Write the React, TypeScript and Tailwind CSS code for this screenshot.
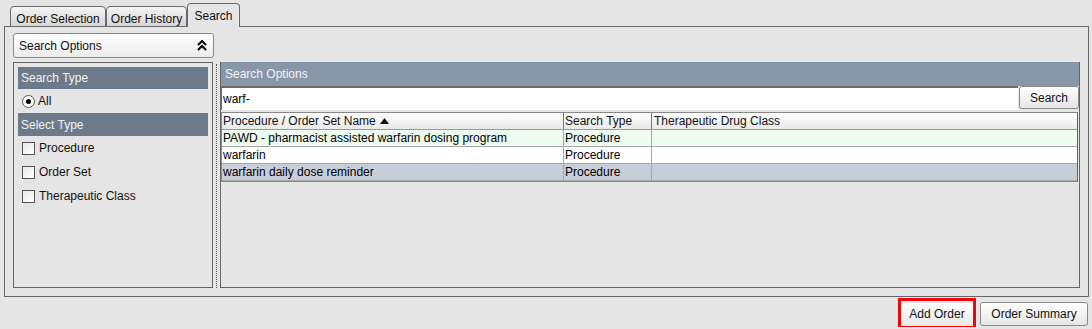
import { useState } from 'react'

const font = { fontFamily: '"Liberation Sans", Arial, sans-serif' }

function Tab({ label, active, width }: { label: string; active?: boolean; width: string }) {
  return (
    <div
      className={`${width} flex items-start justify-center rounded-t-[4px] border border-[#6a6a6a] text-[12px] text-[#111] ${
        active
          ? 'relative z-10 h-[24px] border-b-0 bg-[#e5e5e5] pt-[3px]'
          : 'h-[21px] bg-gradient-to-b from-[#f4f4f4] to-[#d6d6d6] pt-[3px]'
      }`}
    >
      {label}
    </div>
  )
}

function Checkbox({ label }: { label: string }) {
  return (
    <div className="flex h-[24px] items-center pl-[4px] text-[12px] text-[#111]">
      <span className="h-[13px] w-[13px] border border-[#555] bg-gradient-to-br from-[#e8e8e8] to-white" />
      <span className="ml-[4px]">{label}</span>
    </div>
  )
}

const rows = [
  { name: 'PAWD - pharmacist assisted warfarin dosing program', type: 'Procedure', bg: 'bg-[#edfbf0]' },
  { name: 'warfarin', type: 'Procedure', bg: 'bg-white' },
  { name: 'warfarin daily dose reminder', type: 'Procedure', bg: 'bg-[#c8ced9]' },
]

export default function App() {
  const [query, setQuery] = useState('warf-')

  return (
    <div className="h-[329px] w-[1092px] overflow-hidden bg-[#e5e5e5]" style={font}>
      <div className="flex h-[27px] items-end pl-[10px]">
        <Tab label="Order Selection" width="w-[96px]" />
        <Tab label="Order History" width="w-[81px]" />
        <Tab label="Search" width="w-[53px]" active />
      </div>

      <div className="-mt-px ml-[4px] h-[271px] w-[1085px] border border-[#666] pl-[8px] pt-[6px]">
        <div className="flex h-[25px] w-[201px] items-center justify-between rounded-[3px] border border-[#8a8a8a] bg-gradient-to-b from-white to-[#ececec] pl-[5px] pr-[6px] text-[12px] text-[#111]">
          <span>Search Options</span>
          <svg width="10" height="11" viewBox="0 0 10 11">
            <path d="M1 5 L5 1 L9 5 M1 10 L5 6 L9 10" stroke="#000" strokeWidth="2" fill="none" />
          </svg>
        </div>

        <div className="mt-[4px] flex h-[226px]">
          <div className="w-[200px] border border-[#666] px-[4px] pt-[4px]">
            <div className="flex h-[22px] items-center bg-[#6c7a89] pl-[3px] text-[12px] text-[#f2f2f2]">Search Type</div>
            <div className="flex h-[24px] items-center pl-[4px] text-[12px] text-[#111]">
              <span className="flex h-[13px] w-[13px] items-center justify-center rounded-full border border-[#555] bg-white">
                <span className="h-[5px] w-[5px] rounded-full bg-black" />
              </span>
              <span className="ml-[3px]">All</span>
            </div>
            <div className="flex h-[23px] items-center bg-[#6c7a89] pl-[3px] text-[12px] text-[#f2f2f2]">Select Type</div>
            <Checkbox label="Procedure" />
            <Checkbox label="Order Set" />
            <Checkbox label="Therapeutic Class" />
          </div>

          <div className="flex w-[7px] justify-center pt-[2px]">
            <div className="h-full border-l border-dotted border-[#555]" />
          </div>

          <div className="flex w-[860px] flex-col border border-[#666] border-t-0">
            <div className="flex h-[24px] items-center bg-[#8896aa] pl-[4px] text-[12px] text-[#f4f4f4]">Search Options</div>
            <div className="flex h-[24px]">
              <input
                value={query}
                onChange={e => setQuery(e.target.value)}
                className="h-full w-[797px] border-t-2 border-l border-[#6b6b6b] bg-white pl-[1px] text-[12px] text-black outline-none"
                style={font}
              />
              <button className="ml-px h-[23px] w-[60px] rounded-[3px] border border-[#8a8a8a] bg-gradient-to-b from-white to-[#e6e6e6] text-[12px] text-[#111]">
                Search
              </button>
            </div>
            <div className="mr-[1px] mt-[2px] border border-[#888] border-r-[#666]">
              <div className="flex h-[17px] border-b border-[#999] bg-gradient-to-b from-white to-[#e9e9e9] text-[12px] text-[#111]">
                <div className="flex w-[342px] items-center border-r border-[#777] pl-[1px]">
                  Procedure / Order Set Name
                  <svg className="ml-[4px]" width="9" height="6" viewBox="0 0 9 6">
                    <path d="M0 6 L4.5 0 L9 6 Z" fill="#111" />
                  </svg>
                </div>
                <div className="flex w-[88px] items-center border-r border-[#777] pl-[1px]">Search Type</div>
                <div className="flex flex-1 items-center pl-[2px]">Therapeutic Drug Class</div>
              </div>
              {rows.map(r => (
                <div key={r.name} className={`flex h-[17px] border-b border-[#a8a8a8] text-[12px] text-black ${r.bg}`}>
                  <div className="flex w-[342px] items-center border-r border-[#a8a8a8] pl-[1px]">{r.name}</div>
                  <div className="flex w-[88px] items-center border-r border-[#a8a8a8] pl-[1px]">{r.type}</div>
                  <div className="flex-1" />
                </div>
              ))}
            </div>
          </div>
        </div>
      </div>

      <div className="mt-[1px] flex items-start justify-end gap-[4px] pr-[4px]">
        <div className="h-[29px] w-[78px] border-[3px] border-[#e8080e] bg-[#e5e5e5]">
          <button className="h-full w-full bg-gradient-to-b from-white to-[#e8e8e8] text-[12px] text-[#111]">Add Order</button>
        </div>
        <button className="mt-[4px] h-[24px] w-[108px] rounded-[3px] border border-[#8a8a8a] bg-gradient-to-b from-white to-[#e6e6e6] text-[12px] text-[#111]">
          Order Summary
        </button>
      </div>
    </div>
  )
}
